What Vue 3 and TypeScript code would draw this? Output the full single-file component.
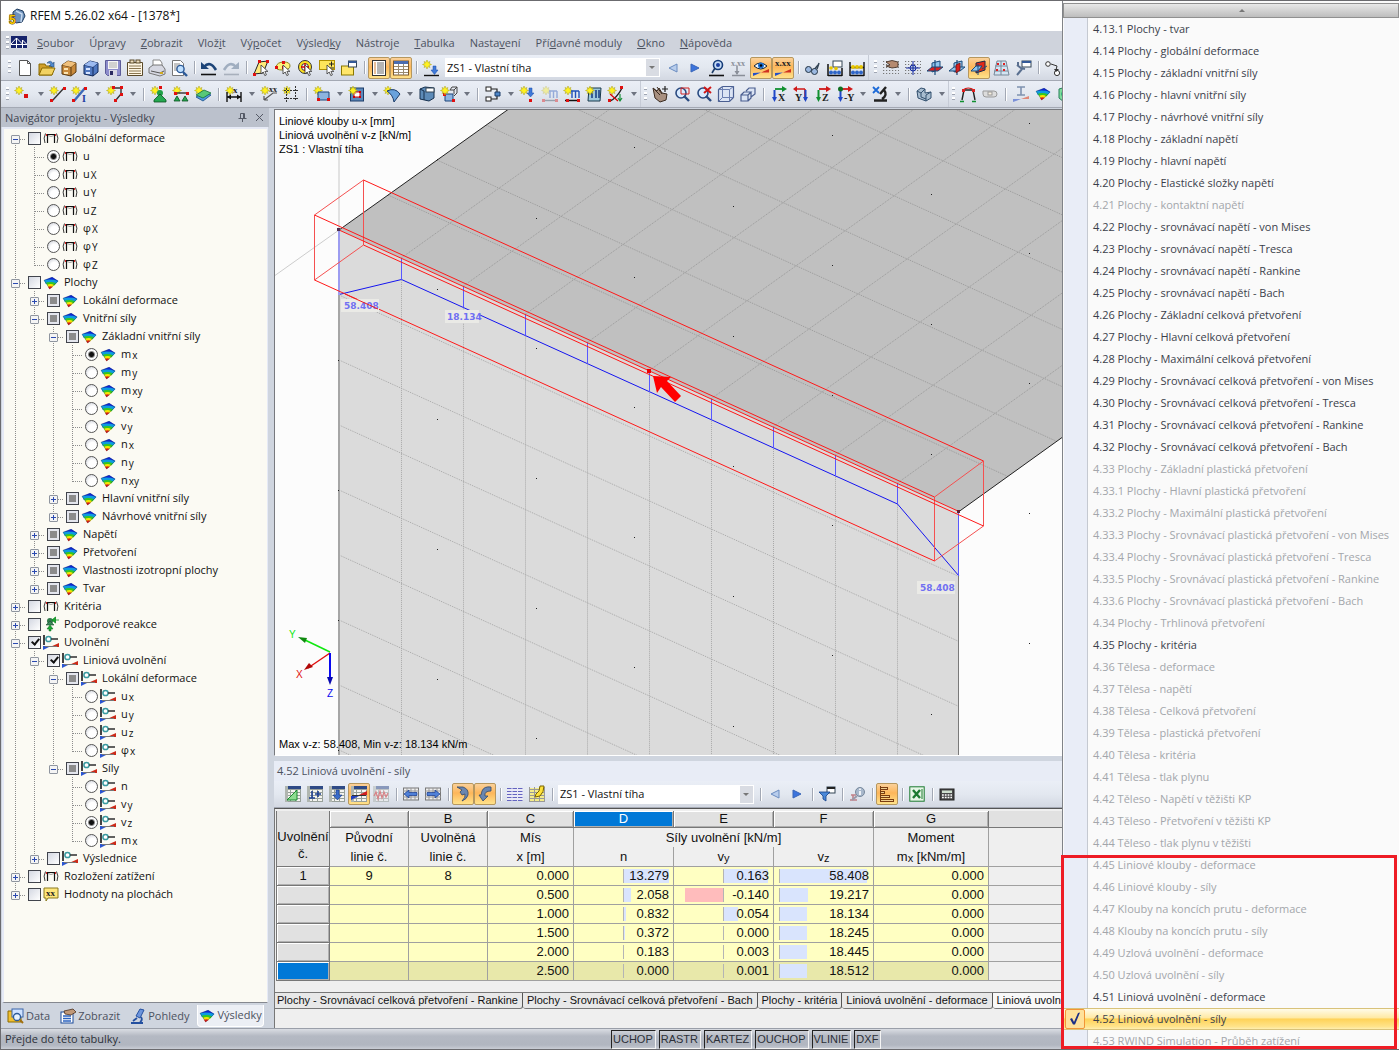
<script setup lang="ts">
import { ref } from 'vue'

/* ---------- small drawing helpers for 16x16 icons ---------- */
const R = (x: number, y: number, w: number, h: number, fill: string, stroke = 'none') =>
  `<rect x="${x}" y="${y}" width="${w}" height="${h}" fill="${fill}" stroke="${stroke}"/>`
const P = (d: string, stroke = '#222', w = 1, fill = 'none') =>
  `<path d="${d}" stroke="${stroke}" stroke-width="${w}" fill="${fill}"/>`
const C = (x: number, y: number, r: number, fill: string, stroke = 'none', w = 1) =>
  `<circle cx="${x}" cy="${y}" r="${r}" fill="${fill}" stroke="${stroke}" stroke-width="${w}"/>`
const T = (x: number, y: number, s: string, size = 8, fill = '#222') =>
  `<text x="${x}" y="${y}" font-size="${size}" font-family="Liberation Serif, serif" font-weight="bold" fill="${fill}">${s}</text>`
const dot = (x: number, y: number) => R(x, y, 3, 3, '#e01010')
const star = P('M4 0l1 2.400 2-.9-.9 2L8.500 4.500 6.100 5.500l.9 2-2-.9L4 9 3 6.600l-2 .9.9-2L-.5 4.500l2.400-1-.9-2 2 .9z', '#a89c10', 0.5, '#fff21f')
const cursor = P('M8 5v9l2.200-2 1.600 3.600 1.600-.7-1.500-3.500h3z', '#333', 0.8, '#fff')
const grid = (c: string) => P('M.5 3.500h15M.5 6.500h15M.5 9.500h15M.5 12.500h15M.5 15.500h15M.5 1v15M5.500 1v15M10.500 1v15M15.500 1v15', c, 1, 'none')
const sheet = R(0, 1, 16, 15, '#f4f4f0') + grid('#98a09a') + R(3, 0, 13, 3, '#2e4a86') + R(0, 0, 3, 16, '#b0b6b0')
const dots = P('M0 1.500h16M0 4.500h16M0 7.500h16M0 10.500h16M0 13.500h16', '#777', 1.2).replace('/>', ' stroke-dasharray="1.2 1.800"/>')
const planes = (a: string, b: string) =>
  P('M5 3l8-2v8l-8 3z', '#1a4a7a', 1, a) + P('M0 11l5-4 11 0-5 4z', '#1a4a7a', 1, b) + P('M8 0v15', '#1a4a7a', 1.2)
const eye = P('M1 6q6-6 13 0-6 6-13 0z', '#123', 1, '#eef6ff') + C(8, 5.5, 3, '#1b6fd0') + C(8, 5.5, 1.3, '#000')
const wedge = P('M0 16V13L8 12.500z', 'none', 1, '#2450c8') + P('M8 12.500h8V9z', 'none', 1, '#d03020')
const axes = (a: string, b: string, l: string, flip = false) =>
  (flip
    ? P('M12 3H3M12 3v11', a, 1.6) + P('M4 0v6L0 3z', 'none', 1, a) + P('M10 11h5l-2.500 5z', 'none', 1, b) + P('M12.500 4v8', b, 2) + T(2, 15, l, 10)
    : P('M4 3h8', a, 1.8) + P('M11 0v6l5-3z', 'none', 1, a) + P('M3.500 4v8', b, 2) + P('M1 11h5l-2.500 5z', 'none', 1, b) + T(7, 15, l, 10))
const rainbow =
  '<g transform="translate(1 2) scale(.9 .82)"><path d="M0 4L9 0l7 5-8 3z" fill="#1024d8"/><path d="M0 4q7-2 16 1l-3 3.500q-6-2-11 0z" fill="#0d9be0"/><path d="M2 7q6-2 11.500 1l-2 2.500q-4-2-7.500 0z" fill="#35c821"/><path d="M3.500 9.500q4-2 8 .5L9 12.500q-2-1-4.200 0z" fill="#f6e500"/><path d="M4.500 12q3-1.600 5 .2L6 15z" fill="#e81a10"/><path d="M0 4L9 .5l6.500 4.500-9 9.500z" fill="none" stroke="#123a50" stroke-width=".4"/></g>'

const icons: Record<string, string> = {
  app: P('M4 4l4-3 6 2 2 5-3 6-6 1-3-3z', '#1d3a5e', 1, '#6f93bd') + P('M7 3l6 3-1 8', '#c8daf0', 1.4) + '<text x="0" y="16" font-family="Liberation Sans, sans-serif" font-size="12" font-weight="bold" fill="#f5c400" stroke="#4a3a00" stroke-width="1" paint-order="stroke">5</text>',
  bridge: R(0, 1, 16, 12, '#16236b') + P('M0 9.500h16M5.500 13V3M11.500 13V5M5.500 3L0 9M5.500 3l6 6M11.500 5l4 4', '#fff', 1),
  new: P('M2.500.5h8l3 3v12h-11z', '#555', 1, '#fff') + P('M10.500.5v3h3', '#555'),
  open: P('M0 4h6l1 2h6v9H0z', '#8a6a00', 1, '#d2a02a') + P('M3 8h13l-3 7H0z', '#8a6a00', 1, '#f2d262') + P('M8 3q4-4 6 1l1-2v5l-5-1 2-1q-1-3-4-2z', '#234b7b', 0.6, '#4f8ad0'),
  drawer: P('M1 5l6-4 8 2v9l-5 4-9-2z', '#5a3a10', 1, '#c98a3c') + P('M1 5l9 2v9M10 7l5-4', '#5a3a10') + P('M1 5l6-4 8 2-5 4z', 'none', 1, '#f0c07c') + R(3, 8, 4, 2, '#fce3b0') + R(3, 12, 4, 2, '#fce3b0'),
  drawerBlue: P('M1 5l6-4 8 2v9l-5 4-9-2z', '#10285a', 1, '#5078c0') + P('M1 5l9 2v9M10 7l5-4', '#10285a') + P('M1 5l6-4 8 2-5 4z', 'none', 1, '#9cbaf0') + R(3, 8, 4, 2, '#d5e3ff') + R(3, 12, 4, 2, '#d5e3ff'),
  floppy: P('M.5.5h15v15h-13l-2-2z', '#5c5c98', 1, '#8d8dcc') + R(3, 1, 10, 8, '#f6f6f6') + P('M4 3h8M4 5h8M4 7h8', '#999', 0.8) + R(4, 10, 8, 6, '#d8d8e4') + R(5, 11, 3, 4, '#2a2a60'),
  list: P('M.5 2.500h15v13H.5z', '#5a4a2a', 1, '#fff7e4') + R(3, 0, 4, 3, '#f0e0c0', '#5a4a2a') + R(9, 0, 4, 3, '#f0e0c0', '#5a4a2a') + P('M2 6h12M2 8.500h12M2 11h12M2 13.500h12', '#8a7650'),
  print: P('M4 6V0h7l2 3v4', '#888', 1, '#fff') + P('M0 8l4-3h9l3 4v5l-5 2-11-3z', '#777', 1, '#d6d8e2') + P('M2 11l9 2 4-2', '#555') + R(11, 12, 3, 2, '#d0aa20'),
  preview: P('M1.500.5h8l3 3v12h-11z', '#777', 1, '#fff') + P('M3 4h6M3 6h6M3 8h4M3 10h3', '#888') + C(9.500, 9, 3.600, '#bfe0ff', '#2c5a98', 1.4) + P('M12 12l4 4', '#2c5a98', 2.400),
  undo: P('M0 14.500h15', '#111', 1.6) + P('M3 7Q9 0 15 10', '#1c4478', 2.600) + P('M0 2v7h8z', 'none', 1, '#1c4478'),
  redo: P('M1 14.500h15', '#a8b0bc', 1.6) + P('M13 7Q7 0 1 10', '#a0aec0', 2.600) + P('M16 2v7H8z', 'none', 1, '#a0aec0'),
  selPoly: P('M6 2l9-1-5 12-9 1z', '#222', 1, '#ffe97a') + dot(5, 0) + dot(13, 0) + dot(0, 13) + cursor,
  selEll: P('M1 7q1-5 8-5 6 0 6 4t-8 4q-6 0-6-3z', '#8a8020', 1, '#fff27a') + dot(0, 6) + dot(7, 1) + dot(7, 6) + cursor,
  selRing: C(8, 7, 6.500, '#ffe21c', '#333') + C(8, 7, 3.500, '#fff', '#333') + P('M8 3v8M4 7h8', '#d00', 1.400) + cursor,
  selRect: R(0.5, 0.5, 15, 9, '#ffe65a', '#b09000') + P('M10 4h5M12.500 1.500v5M10 8h5', '#222') + cursor,
  winNote: R(0.5, 6, 12, 9, '#ffe66a', '#8a7800') + R(7.500, 1, 8, 6, '#fff', '#345') + R(7.500, 1, 8, 2, '#345a98'),
  tabDoc: R(1.500, 0.5, 13, 15, '#fff', '#333') + P('M3 3h2M3 5h2M3 7h2M3 9h2M3 11h2M3 13h2', '#c86000', 0.8) + P('M6 3h7M6 5h7M6 7h7M6 9h7M6 11h7M6 13h7', '#444', 0.8),
  tabGrid: R(0.5, 1, 15, 14, '#fff', '#7a5a30') + R(1, 1, 14, 3, '#4a6cb0') + P('M1 6.500h14M1 9.500h14M1 12.500h14M5.500 4v11M10.500 4v11', '#9a8a70'),
  loadNew: star + P('M1 15.500h15', '#111', 1.400) + P('M10 6h3v4h2l-3.500 4.500L8 10h2z', '#164aa8', 0.5, '#3f79d8'),
  prev: P('M12 4v8L4 8z', '#6a8cc0', 1, '#b8cdec'),
  next: P('M4 4v8L12 8z', '#3a66b8', 1, '#3c74dd'),
  glass: C(9, 5, 4.500, '#c6dcf6', '#153c78', 1.600) + C(9, 5, 2, '#1b3fa0') + P('M6 8l-3 5', '#1d3c68', 1.600) + P('M0 15.500h15', '#111', 1.600),
  xxx: T(0, 6, 'x.xx', 8, '#8a8f99') + P('M6 6v8M1 15.500h13', '#8a8f99', 1.500) + P('M3.500 11h5L6 15z', 'none', 1, '#8a8f99'),
  eyeRes: eye + wedge,
  xxxRes: T(0, 6, 'x.xx', 9) + wedge,
  binoc: P('M2 7l6 4M8 11l5-6', '#345', 1.400) + C(3.500, 9.500, 3, '#9bb8e0', '#234') + C(9.500, 11.500, 3, '#9bb8e0', '#234') + P('M12 9l2-6', '#345', 1.500),
  abWin: P('M1 4v12M15 8v8M1 15.500h14', '#111', 1.500) + R(6, 1, 9, 6, '#fff', '#345') + C(4, 8, 1.800, '#e6c400') + C(4, 12.500, 2, '#2f66c8') + C(8, 12.500, 2, '#2f66c8') + C(12, 12.500, 2, '#2f66c8') + C(9, 8.500, 1.800, '#e6c400'),
  ab: P('M1 2v14M15 2v14M1 7.500h14M1 15.500h14', '#111', 1.400) + C(4, 7, 2, '#e6c400') + C(8, 7, 2, '#e6c400') + C(12, 7, 2, '#e6c400') + C(4, 12.500, 2, '#2f66c8') + C(8, 12.500, 2, '#2f66c8') + C(12, 12.500, 2, '#2f66c8'),
  handGrid: dots + P('M3 2q6-3 12 0v5l-6 1-6-2 4-1z', '#3a2a20', 0.8, '#b58a70'),
  snap: dots + C(8, 8, 3, '#bcd', '#1428a0') + P('M8 1v14M1 8h14', '#1428a0'),
  plA: planes('#8fc4ee', '#d82020'),
  plB: planes('#8fc4ee', '#8fc4ee') + P('M7 5l4-2v7l-4 3z', '#701010', 0.8, '#d82020'),
  plC: P('M5 3l9-2v9l-9 3z', '#1a2a4a', 1, '#e02818') + P('M0 11l5-5 6 0-4 5z', '#1a4a7a', 1, '#8fc4ee') + P('M7 4v11M11 9l5-3', '#1a4a7a'),
  netRed: P('M4 1h9l3 14H1z', '#789', 1, '#d3e4f2') + P('M8 1v14M2 6h12M1 11h14', '#789') + [[4, 3], [10, 3], [3, 9], [10, 9]].map(([x, y]) => R(x, y, 2, 2, '#e02020')).join(''),
  wrench: R(7, 1, 9, 6, '#fff', '#345') + R(7, 1, 9, 2, '#345a98') + P('M2 5l4 3 4 1M7 9l-5 6M3 2v4', '#5a7090', 2),
  circles: C(3, 4, 2.300, '#fff', '#333') + C(12, 13, 2.600, '#fff', '#333') + P('M6 4l6 2-1 4', '#333') + P('M9 9l5 0-3 3z', 'none', 1, '#333'),
  node: star + R(9, 8, 4, 4, '#d81010'),
  line: star + P('M2 15L14 2', '#333', 1.400) + dot(0, 13) + dot(13, 1),
  member: star + P('M2 15L13 2', '#3b69b8', 2.400) + dot(0, 13) + dot(12, 1) + T(10, 16, 'I', 10, '#1c3ca0'),
  polyl: star + P('M7 2h7v6l-5 6', '#333', 1.400) + dot(5, 0) + dot(13, 0) + dot(13, 7) + dot(7, 13),
  support: star + C(9, 7, 3, '#1fa048') + P('M9 8l6 6v2H3v-2z', '#0b5020', 0.8, '#24a850') + dot(8, 0),
  supLine: star + P('M2 7h12', '#333', 1.400) + dot(1, 6) + dot(13, 6) + P('M4 10l3 5H1z M12 10l3 5H9z', '#0b5020', 0.8, '#24a850'),
  soil: star + P('M1 11l8-5 7 3-8 6z', '#174c86', 0.8, '#4e9ae0') + P('M1 9l8-5 7 3-8 5z', '#14703a', 0.8, '#58c878'),
  dimX: star + P('M1 6v10M15 6v10M1 11h14', '#111', 1.400) + P('M1 11l4-2.500v5zM15 11l-4-2.500v5z', 'none', 1, '#111') + T(7, 7, 'x', 9),
  note: star + P('M3 14L12 7h4M3 14l0-4M3 14h4', '#555', 1.200) + T(8, 6, 'xx', 8),
  dash: star + P('M3.500 2v14M12.500 0v14M1 4.500h15M1 12.500h15', '#333').replace('/>', ' stroke-dasharray="2 1"/>'),
  surf: star + P('M4 6h11v8H4z', '#1d4478', 1, '#8cb4e0') + dot(3, 12) + dot(13, 12),
  opening: R(1.500, 2, 13, 13, '#5c8abc', '#1d3c68') + R(5, 6, 6, 5, '#fff', '#d00') + [[4, 5], [10, 5], [4, 10], [10, 10]].map(([x, y]) => R(x, y, 2, 2, '#d00000')).join('') + star,
  shell: star + P('M3 5q8-4 13 3l-6 8Q9 9 3 5z', '#1d3c68', 1, '#69a2dc'),
  solid: P('M1 3l5-2 9 1v10l-5 3-9-2z', '#16304f', 1, '#5d8bb8') + R(7, 2, 8, 4, '#fff', '#345') + P('M1 3l4 2v9', '#16304f'),
  copy: P('M4 8h8v7H4z', '#1d4478', 1, '#8cb4e0') + P('M9 4l2-3h5v6l-3 3M9 4h4v4M13 4l3-3', '#444') + dot(2, 7) + dot(11, 13) + star,
  tree2: R(1, 1, 5, 4, '#fff', '#222') + R(1, 11, 5, 4, '#fff', '#222') + P('M6 3h6v4M6 13h6v-4', '#222', 1.200) + P('M10 6h5v4h-5z', '#1d3c68', 1, '#4d86c8'),
  ldNode: star + P('M9 2h3v5h2l-3.500 4L7 7h2z', '#164aa8', 0.5, '#3f79d8') + dot(9, 13),
  ldFaint: `<g opacity=".4">${star}${P('M7 5h8M8 5v7M11.500 5v7M15 5v7', '#2050b8', 1.400)}${P('M1 14.500h15', '#345', 1.400)}${dot(0, 13)}${dot(13, 13)}</g>`,
  ldLine: star + P('M7 5h8M8 5v7M11.500 5v7M15 5v7', '#2050b8', 1.400) + P('M1 14.500h15', '#111', 1.500) + dot(2, 13) + dot(13, 13),
  ldSolid: P('M3 2h12l-1 13H2z', '#18384a', 1, '#9cc8dc') + P('M6 4v8M10 4v8M13 4v8', '#123a80', 1.500) + star,
  ldDef: star + P('M2 15Q9 12 14 2', '#222', 1.400) + P('M2 8l8 7', '#d00', 1.200) + dot(0, 13) + dot(12, 0) + P('M12 8v6M10 12l2 3 2-3', '#18903a', 1.200),
  hand: P('M1 2l4 3 2-3 3 5 5 1-1 6-6 2-5-4z', '#3b2b20', 1, '#a89080') + P('M2 3l6 6M5 1l5 7', '#3b2b20', 1) + P('M13 0v6M10 3h6', '#222', 1.200),
  zoomWin: C(7, 7, 5, '#d9ebff', '#2a4a80', 1.600) + P('M10 10l5 5', '#2a4a80', 2.400) + P('M7 2h8v6H7z', '#d02020', 1),
  zoomX: C(7, 7, 5, '#d9ebff', '#2a4a80', 1.600) + P('M10 10l5 5', '#2a4a80', 2.400) + P('M8 1l7 6M15 1L8 7', '#d01818', 2),
  cube: P('M.5 3.500l4-3h11v11l-4 4H.5z', '#4a5e90', 1.200, '#dbe4f4') + P('M4.500.5v11h11M.5 3.500h11v12M11.500 3.500l4-3M.5 15.500l4-4', '#6a7eb0', 1),
  cubes: P('M1 9h7v6H1zM1 9l3-3h7L8 9M8 15l3-3V6M6 5l3-3h6v6l-4 3', '#4a5e90', 1.200, '#dbe4f4'),
  axX: axes('#109030', '#2048c8', 'X'),
  axY: axes('#d01818', '#2048c8', 'Y', true),
  axZ: axes('#d01818', '#109030', 'Z'),
  axmY: axes('#d01818', '#2048c8', '-Y') + C(3.500, 3, 2.500, '#107020'),
  micro: P('M1 1l6 6M7 1L1 7', '#1c6ad8', 1.800) + P('M14 1L8 8M12 4q4 5-2 9M2 14.500h13', '#222', 2.400),
  box3: P('M1 5l4-3 4 1v4l6-1v6l-5 3-8-3z', '#33506e', 1, '#a8bdd0') + P('M1 5l4 2v4l5 2M10 9v6M10 9l5-3M5 7l4-4', '#33506e'),
  frame: P('M2 14l2-10h9l2 10', '#222', 1.400) + P('M3 4q5-4 11 0', '#d01010', 1.200) + R(2, 3, 3, 3, '#e02020') + R(12, 3, 3, 3, '#e02020') + P('M0 15.500h4M12 15.500h4', '#109030', 1.600),
  tube: P('M1 5h11q3 0 3 3t-3 3H4q-3 0-3-3z', '#999', 1, '#dcdcdc') + R(6, 6, 4, 3, '#f8f0e0', '#999'),
  ibeam: P('M4 1h8M8 1v8M4 9h8', '#7f92b0', 1.600) + P('M0 16v-3h8z', 'none', 1, '#7a90d8') + P('M8 13h8v-3z', 'none', 1, '#e08878'),
  iso: rainbow,
  iso2: P('M2 3l7-2 6 3-2 10-6 2-5-4z', '#28805a', 1, '#7fdc9c') + C(8, 8, 3.500, '#fce820', '#2a8') + C(8, 8, 1.500, '#e02020'),
  frameSm: P('M4.500 12V3.500h7V12', '#111', 1.2) + P('M5 4.500q3 2 6 0', '#888', 0.8) + R(3, 3, 1, 2, '#e02020') + R(12, 3, 1, 2, '#e02020') + P('M2.500 2.500Q0 7 2 12M13.500 2.500Q16 7 14 12', '#222', 0.9),
  support2: C(7, 4, 3, '#2f7a4a') + P('M7 4l4 4H3z', '#204830', 0.6, '#3a8a5a') + P('M16 3h-4M12.500 0v6L9 3z', '#0c8a20', 0.8, '#18a830') + P('M6 14v-2H4l3-4 3 4H8v2z', '#0c6a20', 0.5, '#18a830'),
  release: P('M1 0v10', '#444', 2) + C(5.500, 4, 2.600, '#fff', '#3a9aa0', 1.500) + P('M8 4h7', '#3a3a3a', 1.600) + P('M0 15v-4l8 0z', 'none', 1, '#2a55d0') + P('M7 12h9V8z', 'none', 1, '#cc2a18') + P('M2 11.500h12', '#777', 1),
  xxTag: P('M1 1h14v10H5l-2 3v-3H1z', '#8a7a20', 1, '#ffe67a') + T(3, 9, 'xx', 9),
  tData: P('M0 3h5l1 2h7v9H0z', '#8a6a00', 1, '#f2c030') + R(4, 1, 11, 8, '#cfe2ff', '#3a64a8') + C(9, 9, 3.500, '#e6f2ff', '#2c5a98', 1.300) + P('M12 12l3 3', '#a07010', 2),
  tShow: R(1, 4, 12, 11, '#fff', '#1b4a9a') + P('M3 8h8M3 10.500h8M3 13h8', '#2a62c0', 1.300) + P('M4 3l9-2 3 3-5 3-6-1z', '#4a3020', 0.8, '#c09878'),
  tView: P('M10 1l4 1-4 8-4-2z', '#2450a0', 1, '#6c94dc') + P('M11 9q2 3-1 5M1 15h12M3 13l4-3', '#2450a0', 1.800),
  tri: sheet + P('M2 14L12 4v10z', '#1a8a30', 1, '#8edc90'),
  tMin: sheet + P('M5 5v7M2 12h6M8 8h6M11 5v6', '#1d3f90', 1.600),
  tDown: sheet + P('M7 4h3v5h3l-4.500 5L4 9h3z', '#14388a', 0.6, '#3a6cc8'),
  tRes: sheet + P('M0 14v-4l8 0z', 'none', 1, '#2240c0') + P('M8 9h8V5z', 'none', 1, '#d02020') + P('M1 9.500h14', '#333'),
  tWave: `<g opacity=".5">${sheet}${P('M1 10l2-4 2 7 2-8 2 7 2-6 2 5 2-4', '#d02020', 1.200)}</g>`,
  tLeft: R(0.5, 2, 15, 12, '#eee', '#777') + P('M0 5h16M0 11h16M4 2v12M8 2v12M12 2v12', '#999') + P('M1 8l5-4v2.500h8v3H6V12z', '#16388a', 0.7, '#4f80d8'),
  tRight: R(0.5, 2, 15, 12, '#eee', '#777') + P('M0 5h16M0 11h16M4 2v12M8 2v12M12 2v12', '#999') + P('M15 8l-5-4v2.500H2v3h8V12z', '#16388a', 0.7, '#4f80d8'),
  hookR: P('M2 1h6q6 2 5 8-1 4-6 6 4-4 3-7l-3 1-2-3 2-2z', '#34496a', 0.8, '#6a86b0'),
  hookL: P('M14 1q-7-1-9 4l-1 4H2l4 6 5-5H8q-1-5 6-5z', '#34496a', 0.8, '#6a86b0'),
  cols: R(0, 2, 16, 12, '#e9e9f6') + P('M0 2.500h16M0 5.500h16M0 8.500h16M0 11.500h16M0 14.500h16', '#6464c0').replace('/>', ' stroke-dasharray="4.500 1"/>'),
  pen: R(0, 2, 16, 13, '#f4ec8a') + grid('#999') + P('M11 0h4q0 6-4 10l-5 1 1-3q4-2 4-8z', '#7a6400', 1, '#ffe23a'),
  funnel: R(8, 1, 8, 6, '#fff', '#345') + R(8, 1, 8, 2, '#222') + P('M0 6h11l-4 4v5l-3-2v-3z', '#123f88', 0.8, '#4a88d8'),
  info: P('M1 14h7M2 9h5M4 9v5', '#c08088', 1.600) + C(11, 6, 4.500, '#a8b8cc', '#77889c') + P('M11 5v4M11 2.500v1.500', '#fff', 1.600) + P('M8 10l-5 4', '#99a', 2),
  bars: P('M1.500 0v16', '#7a3c10') + R(1.500, 1.500, 7, 2, '#f0d090', '#7a3c10') + R(1.500, 5.500, 4, 2, '#f0d090', '#7a3c10') + R(1.500, 9.500, 9, 2, '#f0d090', '#7a3c10') + R(1.500, 13.500, 13, 2, '#f0d090', '#7a3c10'),
  excel: R(0.8, 0.8, 14.400, 14.400, '#e6f6e6', '#1c7a30') + P('M4 4l7 8M11 4l-7 8', '#1c7a30', 2.400) + P('M13 3v10', '#1c7a30'),
  calc: R(1, 3, 14, 11, '#4a4a4a', '#222') + R(3, 4.500, 10, 2.500, '#cfe0cf') + P('M3 9h10M3 11.500h10', '#fff', 1.500).replace('/>', ' stroke-dasharray="1.800 1"/>'),
}

/* ---------- bars ---------- */
const menus = [
  ['', 'S', 'oubor'], ['Úpr', 'a', 'vy'], ['', 'Z', 'obrazit'], ['Vlož', 'i', 't'], ['Vý', 'p', 'očet'], ['Výsled', 'k', 'y'],
  ['Nástro', 'j', 'e'], ['', 'T', 'abulka'], ['Nasta', 'v', 'ení'], ['Pří', 'd', 'avné moduly'], ['', 'O', 'kno'], ['', 'N', 'ápověda'],
]
/* '|' separator, '#' new group, 'v' drop arrow, leading '*' pressed button, '@' load case box */
const bar1 = 'new open drawer drawerBlue floppy list print preview | undo redo | selPoly selEll selRing selRect winNote | *tabDoc *tabGrid | loadNew @ prev next glass xxx *eyeRes *xxxRes | binoc abWin ab # handGrid snap plA plB *plC netRed wrench | circles'.split(' ')
const bar2 = 'node v line member v polyl v | support supLine soil | dimX v note dash | surf v opening v shell v solid copy v | tree2 v ldNode ldFaint ldLine ldSolid ldDef v # hand zoomWin zoomX cube cubes | axX axY axZ axmY v micro v | box3 v # frame tube | ibeam iso iso2'.split(' ')
const bar3 = 'tri tMin tDown *tRes tWave | tLeft tRight | *hookR *hookL | cols pen | @ | prev next | funnel | info | *bars | excel | calc'.split(' ')
const name = (s: string) => s.replace('*', '')
const loadCase = ref('ZS1 - Vlastní tíha')

/* ---------- navigator tree ---------- */
interface Node { t: string; s?: string; i: string; b: 'off' | 'mix' | 'on' | 'radio' | 'sel'; k?: Node[]; more?: boolean }
const rad = (i: string, list: string, sel: string): Node[] =>
  list.split(' ').map((x) => ({ t: x[0], s: x.slice(1), i, b: x === sel ? 'sel' : 'radio' }))
const tree: Node[] = [
  { t: 'Globální deformace', i: 'frameSm', b: 'off', k: rad('frameSm', 'u uX uY uZ φX φY φZ', 'u') },
  { t: 'Plochy', i: 'iso', b: 'off', k: [
    { t: 'Lokální deformace', i: 'iso', b: 'mix', more: true },
    { t: 'Vnitřní síly', i: 'iso', b: 'mix', k: [
      { t: 'Základní vnitřní síly', i: 'iso', b: 'mix', k: rad('iso', 'mx my mxy vx vy nx ny nxy', 'mx') },
      { t: 'Hlavní vnitřní síly', i: 'iso', b: 'mix', more: true },
      { t: 'Návrhové vnitřní síly', i: 'iso', b: 'mix', more: true },
    ] },
    { t: 'Napětí', i: 'iso', b: 'mix', more: true },
    { t: 'Přetvoření', i: 'iso', b: 'mix', more: true },
    { t: 'Vlastnosti izotropní plochy', i: 'iso', b: 'mix', more: true },
    { t: 'Tvar', i: 'iso', b: 'mix', more: true },
  ] },
  { t: 'Kritéria', i: 'frameSm', b: 'off', more: true },
  { t: 'Podporové reakce', i: 'support2', b: 'off', more: true },
  { t: 'Uvolnění', i: 'release', b: 'on', k: [
    { t: 'Liniová uvolnění', i: 'release', b: 'on', k: [
      { t: 'Lokální deformace', i: 'release', b: 'mix', k: rad('release', 'ux uy uz φx', '') },
      { t: 'Síly', i: 'release', b: 'mix', k: rad('release', 'n vy vz mx', 'vz') },
    ] },
    { t: 'Výslednice', i: 'release', b: 'off', more: true },
  ] },
  { t: 'Rozložení zatížení', i: 'frameSm', b: 'off', more: true },
  { t: 'Hodnoty na plochách', i: 'xxTag', b: 'off', more: true },
]
interface Row { n: Node; cells: string[]; ex: string; id: string; group: string }
const rows: Row[] = []
function walk(list: Node[], trail: string[], group: string) {
  list.forEach((n, i) => {
    const last = i === list.length - 1
    const own = last ? 'elbow' : rows.length === 0 ? 'first' : 'tee'
    rows.push({ n, cells: [...trail, own], ex: n.k ? '−' : n.more ? '+' : '', id: 'n' + rows.length, group })
    if (n.k) walk(n.k, [...trail, last ? 'none' : 'pass'], 'g' + rows.length)
  })
}
walk(tree, [], 'g')
const dockTabs = [['tData', 'Data'], ['tShow', 'Zobrazit'], ['tView', 'Pohledy'], ['iso', 'Výsledky']]

/* ---------- model view ---------- */
const xs = Array.from({ length: 11 }, (_, i) => 339 + 62 * i)
const edgeY = (x: number) => 230 + (x - 339) * 0.454
const specks: number[][] = []
for (let i = -1; i <= 7; i++) {
  for (let k = -6; k <= 9; k++) {
    const y = 289 - 71 * i + 130 * k
    if (y > 112 && y < 754) specks.push([437 + Math.round(98.7 * i), y])
  }
}

/* ---------- results table ---------- */
const data = [
  ['1', '9', '8', '0.000', 13.279, 0.163, 58.408], ['', '', '', '0.500', 2.058, -0.14, 19.217], ['', '', '', '1.000', 0.832, 0.054, 18.134],
  ['', '', '', '1.500', 0.372, 0, 18.245], ['', '', '', '2.000', 0.183, 0.003, 18.445], ['', '', '', '2.500', 0, 0.001, 18.512],
]
const bar = (v: number, k: number) => ({ width: Math.floor(Math.abs(v) * k) + 'px' })
const sheetTabs = ['Plochy - Srovnávací celková přetvoření - Rankine', 'Plochy - Srovnávací celková přetvoření - Bach', 'Plochy - kritéria', 'Liniová uvolnění - deformace', 'Liniová uvolnění - síly']
const panes = ['UCHOP', 'RASTR', 'KARTEZ', 'OUCHOP', 'VLINIE', 'DXF']

/* ---------- table list popup; leading '-' means unavailable ---------- */
const upper = ['4.13.1 Plochy - tvar', '4.14 Plochy - globální deformace', '4.15 Plochy - základní vnitřní síly', '4.16 Plochy - hlavní vnitřní síly', '4.17 Plochy - návrhové vnitřní síly', '4.18 Plochy - základní napětí', '4.19 Plochy - hlavní napětí', '4.20 Plochy - Elastické složky napětí', '-4.21 Plochy - kontaktní napětí', '4.22 Plochy - srovnávací napětí - von Mises', '4.23 Plochy - srovnávací napětí - Tresca', '4.24 Plochy - srovnávací napětí - Rankine', '4.25 Plochy - srovnávací napětí - Bach', '4.26 Plochy - Základní celková přetvoření', '4.27 Plochy - Hlavní celková přetvoření', '4.28 Plochy - Maximální celková přetvoření', '4.29 Plochy - Srovnávací celková přetvoření - von Mises', '4.30 Plochy - Srovnávací celková přetvoření - Tresca', '4.31 Plochy - Srovnávací celková přetvoření - Rankine', '4.32 Plochy - Srovnávací celková přetvoření - Bach', '-4.33 Plochy - Základní plastická přetvoření', '-4.33.1 Plochy - Hlavní plastická přetvoření', '-4.33.2 Plochy - Maximální plastická přetvoření', '-4.33.3 Plochy - Srovnávací plastická přetvoření - von Mises', '-4.33.4 Plochy - Srovnávací plastická přetvoření - Tresca', '-4.33.5 Plochy - Srovnávací plastická přetvoření - Rankine', '-4.33.6 Plochy - Srovnávací plastická přetvoření - Bach', '-4.34 Plochy - Trhlinová přetvoření', '4.35 Plochy - kritéria', '-4.36 Tělesa - deformace', '-4.37 Tělesa - napětí', '-4.38 Tělesa - Celková přetvoření', '-4.39 Tělesa - plastická přetvoření', '-4.40 Tělesa - kritéria', '-4.41 Tělesa - tlak plynu', '-4.42 Těleso - Napětí v těžišti KP', '-4.43 Těleso - Přetvoření v těžišti KP', '-4.44 Těleso - tlak plynu v těžišti']
const lower = ['-4.45 Liniové klouby - deformace', '-4.46 Liniové klouby - síly', '-4.47 Klouby na koncích prutu - deformace', '-4.48 Klouby na koncích prutu - síly', '-4.49 Uzlová uvolnění - deformace', '-4.50 Uzlová uvolnění - síly', '4.51 Liniová uvolnění - deformace', '4.52 Liniová uvolnění - síly', '-4.53 RWIND Simulation - Průběh zatížení']
const popup = [{ cls: 'plain', items: upper }, { cls: 'marked', items: lower }]
</script>

<template>
  <div class="app">
    <header class="title"><svg class="ic" v-html="icons.app" /><span>RFEM 5.26.02 x64 - [1378*]</span></header>

    <nav class="menubar">
      <i class="grip" /><svg class="ic" v-html="icons.bridge" />
      <button v-for="m in menus" :key="m.join('')" type="button">{{ m[0] }}<u>{{ m[1] }}</u>{{ m[2] }}</button>
    </nav>

    <div v-for="(b, bi) in [bar1, bar2]" :key="bi" class="toolbar" :class="{ second: bi === 1 }">
      <i class="grip" />
      <template v-for="(s, i) in b" :key="i">
        <i v-if="s === '|'" class="sep" />
        <span v-else-if="s === '#'" class="group"><i class="grip" /></span>
        <button v-else-if="s === 'v'" type="button" class="drop" aria-label="Další" />
        <span v-else-if="s === '@'" class="combo wide"><select v-model="loadCase" aria-label="Zatěžovací stav"><option>ZS1 - Vlastní tíha</option></select></span>
        <button v-else type="button" class="tool" :class="{ on: s[0] === '*' }" :aria-label="name(s)"><svg class="ic" v-html="icons[name(s)]" /></button>
      </template>
    </div>

    <main class="work">
      <aside class="dock">
        <div class="dock-head">
          <span>Navigátor projektu - Výsledky</span>
          <button type="button" aria-label="Připnout"><svg width="9" height="9" viewBox="0 0 9 9"><path d="M2.500 5V.5h4V5M.5 5.500h8M4.500 6v3M5.500 1v4" fill="none" stroke="#555a66" /></svg></button>
          <button type="button" aria-label="Zavřít"><svg width="9" height="9" viewBox="0 0 9 9"><path d="M1 1l7 7M8 1L1 8" fill="none" stroke="#555a66" /></svg></button>
        </div>
        <div class="tree">
          <div v-for="r in rows" :key="r.id" class="row">
            <span v-for="(c, ci) in r.cells" :key="ci" class="cell" :class="[c, { own: ci === r.cells.length - 1 }]">
              <button v-if="r.ex && ci === r.cells.length - 1" type="button" class="exp" :class="{ plus: r.ex === '+' }" :aria-label="r.ex" />
            </span>
            <input v-if="r.n.b === 'radio' || r.n.b === 'sel'" :id="r.id" type="radio" :name="r.group" :checked="r.n.b === 'sel'" />
            <input v-else :id="r.id" type="checkbox" :class="{ mix: r.n.b === 'mix' }" :checked="r.n.b === 'on'" />
            <label :for="r.id"><svg class="ic" v-html="icons[r.n.i]" /><span class="lbl">{{ r.n.t }}<small v-if="r.n.s">{{ r.n.s }}</small></span></label>
          </div>
        </div>
        <div class="dock-tabs">
          <button v-for="(t, i) in dockTabs" :key="t[1]" type="button" :class="{ active: i === 3 }"><svg class="ic" v-html="icons[t[0]]" />{{ t[1] }}</button>
        </div>
      </aside>

      <section class="right">
        <div class="view">
          <svg class="scene" aria-label="Model">
            <defs>
              <clipPath id="topFace"><path d="M339 230L541 86H1500V123L959 511.500z" /></clipPath>
              <clipPath id="sideFace"><path d="M339 230L959 511.500V770H339z" /></clipPath>
            </defs>
            <g transform="translate(-275 -110)">
              <path d="M339 100V230" stroke="#e2e2e2" stroke-width="2" />
              <path d="M270 279L339 230" stroke="#cccccc" />
              <path d="M339 230L541 86H1500V123L959 511.500z" fill="#c0c0c0" />
              <path d="M339 230L959 511.500V770H339z" fill="#dbdbdb" />
              <g clip-path="url(#topFace)" stroke="#999999" stroke-dasharray="1 1">
                <path v-for="x in xs.slice(1, 10)" :key="'a' + x" :d="`M${x} ${edgeY(x)}l800 -571`" />
                <path v-for="k in 14" :key="'b' + k" :d="`M${339 + 49 * k} ${230 - 35 * k}l620 281.500`" />
              </g>
              <g clip-path="url(#sideFace)" stroke="#a8a8a8" stroke-dasharray="1 1">
                <path v-for="x in xs.slice(1, 10)" :key="'c' + x" :d="`M${x + 0.5} ${edgeY(x)}V770`" />
                <path v-for="k in 11" :key="'d' + k" :d="`M339 ${230 + 65 * k}l620 281.500`" />
              </g>
              <path d="M339 230V770" stroke="#a6a6a6" stroke-width="2" />
              <path d="M958.500 511V770" stroke="#7a7a7a" />
              <path d="M339 230L541 86M959 511.500L1500 123" stroke="#222" fill="none" />
              <rect v-for="(p, i) in specks" :key="i" :x="p[0]" :y="p[1]" width="1" height="1" fill="#222" />
              <g fill="none" stroke="#5858ff">
                <path d="M339 294.500L401.500 279.500L897.500 504L959 576" stroke="#1414f0" />
                <path d="M339 230V295" stroke="#9c9cf0" stroke-width="2" />
                <path d="M958.500 512V576" />
                <path v-for="x in xs.slice(1, 10)" :key="'e' + x" :d="`M${x + 0.5} ${edgeY(x)}V${279.500 + (x - 401) * 0.4526}`" stroke="#5858ff" />
              </g>
              <g fill="none" stroke="#ff1818">
                <path d="M314.500 215L363.500 180V245L314.500 280zM934.500 497L983.500 461V526L934.500 561z" stroke="#f55050" />
                <path d="M314.500 215L934.500 497M363.500 180L983.500 461M363.500 245L983.500 526M314.500 280L934.500 561M339 230L959 511.500" />
              </g>
              <rect x="337" y="228" width="3" height="3" fill="#503050" /><rect x="957" y="510" width="3" height="3" fill="#602030" />
              <rect x="647" y="369" width="4" height="4" fill="#e00" />
              <path d="M653 376l18 1-4 4 14 15-6 6-14-15-4 6z" fill="#f00" />
              <g class="val">
                <rect x="341" y="299" width="38" height="13" /><text x="344" y="309">58.408</text>
                <rect x="445" y="310" width="34" height="13" /><text x="447" y="320">18.134</text>
                <rect x="917" y="581" width="38" height="13" /><text x="920" y="591">58.408</text>
              </g>
              <path d="M345 294L378 309" stroke="#f02020" fill="none" />
              <g stroke-width="1.500" fill="none"><path d="M330 652L305 640" stroke="#10e810" /><path d="M330 653L308 668" stroke="#e01010" /><path d="M330 653V678" stroke="#0808f0" stroke-width="2" /></g>
              <path d="M298 637l9 1-2 5z" fill="#108a10" /><path d="M304 670l5-7 4 4z" fill="#b00808" /><path d="M327 677h6l-3 8z" fill="#0808b0" />
              <g class="axis"><text x="289" y="638" fill="#10e810">Y</text><text x="296" y="678" fill="#e01010">X</text><text x="327" y="697" fill="#0808f0">Z</text></g>
            </g>
          </svg>
          <div class="caption top">Liniové klouby u-x [mm]<br />Liniová uvolnění v-z [kN/m]<br />ZS1 : Vlastní tíha</div>
          <div class="caption bottom">Max v-z: 58.408, Min v-z: 18.134 kN/m</div>
        </div>

        <div class="panel">
          <div class="panel-title">4.52 Liniová uvolnění - síly</div>
          <div class="toolbar third">
            <template v-for="(s, i) in bar3" :key="i">
              <i v-if="s === '|'" class="sep" />
              <span v-else-if="s === '@'" class="combo"><select v-model="loadCase" aria-label="Zatěžovací stav tabulky"><option>ZS1 - Vlastní tíha</option></select></span>
              <button v-else type="button" class="tool" :class="{ on: s[0] === '*' }" :aria-label="name(s)"><svg class="ic" v-html="icons[name(s)]" /></button>
            </template>
          </div>
          <div class="grid">
            <table>
              <colgroup><col class="c0" /><col class="c1" /><col class="c1" /><col class="c2" /><col class="c3" /><col class="c3" /><col class="c3" /><col class="c4" /><col /></colgroup>
              <thead>
                <tr class="letters"><th class="corner" rowspan="3">Uvolnění<br />č.</th><th>A</th><th>B</th><th>C</th><th class="cur">D</th><th>E</th><th>F</th><th>G</th><th class="rest" /></tr>
                <tr class="h1"><th>Původní</th><th>Uvolněná</th><th>Mís</th><th colspan="3">Síly uvolnění [kN/m]</th><th>Moment</th><th /></tr>
                <tr class="h2"><th>linie č.</th><th>linie č.</th><th>x [m]</th><th>n</th><th>v<small>y</small></th><th>v<small>z</small></th><th>m<small>x</small> [kNm/m]</th><th /></tr>
              </thead>
              <tbody>
                <tr v-for="(d, i) in data" :key="i" :class="{ last: i === 5 }">
                  <th>{{ d[0] }}</th><td class="mid">{{ d[1] }}</td><td class="mid">{{ d[2] }}</td><td>{{ d[3] }}</td>
                  <td><i class="bar half" :style="bar(+d[4], 3.46)" /><span>{{ (+d[4]).toFixed(3) }}</span></td>
                  <td><i class="bar" :class="+d[5] < 0 ? 'neg' : 'half'" :style="bar(+d[5], 272)" /><span>{{ (+d[5]).toFixed(3) }}</span></td>
                  <td><i class="bar left" :style="bar(+d[6], 1.5)" /><span>{{ (+d[6]).toFixed(3) }}</span></td>
                  <td>0.000</td><td class="rest" />
                </tr>
              </tbody>
            </table>
            <div class="sheet-tabs"><button v-for="(t, i) in sheetTabs" :key="t" type="button" :class="{ active: i === 4 }">{{ t }}</button></div>
          </div>
        </div>
      </section>
    </main>

    <footer class="status"><span class="hint">Přejde do této tabulky.</span><span v-for="p in panes" :key="p" class="pane">{{ p }}</span></footer>

    <div class="popup">
      <button type="button" class="scroll" aria-label="Nahoru"><i /></button>
      <div v-for="g in popup" :key="g.cls" :class="g.cls">
        <button v-for="t in g.items" :key="t" type="button" class="item" :class="{ hot: t.startsWith('4.52') }" :disabled="t[0] === '-'">
          <span class="gut"><svg v-if="t.startsWith('4.52')" width="12" height="14" viewBox="0 0 12 14"><path d="M1 7l2-1 2 4 4-9 2-.5-5 12H4z" fill="#1c2f86" /></svg></span>
          <span class="txt">{{ t.replace(/^-/, '') }}</span>
        </button>
      </div>
    </div>
  </div>
</template>

<style>
html, body { margin: 0; }
</style>

<style scoped>
.app { position: relative; display: flex; flex-direction: column; height: 100vh; overflow: hidden; box-sizing: border-box; border: 1px solid #6b6b6f; border-right: 0; background: #cfd5df; font: 11px/18px "Open Sans", "Noto Sans", sans-serif; color: #111; }
button { font: inherit; color: inherit; border: 0; padding: 0; margin: 0; background: none; }
.ic { width: 16px; height: 16px; flex: none; overflow: visible; }
.title { display: flex; align-items: center; gap: 5px; height: 30px; padding-left: 8px; background: #fff; font-size: 12px; flex: none; }
.menubar { display: flex; align-items: center; height: 24px; padding-left: 4px; background: #cfd3dc; color: #4c5260; flex: none; }
.menubar .grip { margin-right: 2px; }
.menubar button { margin-left: 9px; padding: 0 3px; white-space: nowrap; }
.menubar .ic + button { margin-left: 7px; }
.grip { width: 3px; height: 15px; margin: 0 1px; flex: none; background: repeating-linear-gradient(#fff 0 2px, #9fa5b2 2px 3px, transparent 3px 5px); }
.toolbar { display: flex; align-items: center; height: 25px; flex: none; padding-left: 6px; overflow: hidden; background: linear-gradient(#eaeef6, #e3e8f0 50%, #d3d8e2); border-bottom: 1px solid #a4a9b4; }
.toolbar .grip { margin-right: 3px; }
.toolbar.second { height: 26px; padding-left: 4px; }
.tool { display: flex; align-items: center; justify-content: center; flex: none; width: 22px; height: 22px; box-sizing: border-box; }
.tool.on { border: 1px solid #b6975e; border-radius: 2px; background: linear-gradient(#fbd19a, #fdb65a 45%, #ffe28a); }
.sep { width: 1px; height: 13px; margin: 0 3px 0 4px; background: #a2a8b4; box-shadow: 1px 0 #fff; flex: none; }
.second .sep { margin-right: 4px; }
.group { display: flex; align-items: center; width: 11px; height: 100%; justify-content: flex-end; flex: none; border-left: 1px solid #c6cbd6; }
.group .grip { margin-left: 0; }
.second .group { width: 8px; }
.second .group .grip { margin-right: 2px; }
.drop { width: 13px; height: 20px; display: flex; align-items: center; justify-content: center; flex: none; }
.drop::after { content: ""; border: 3px solid transparent; border-top: 4px solid #6e7480; border-bottom: 0; }
.combo { position: relative; flex: none; width: 196px; height: 19px; margin: 0 2px; }
.combo.wide { width: 215px; margin-left: 3px; }
.combo::before { content: ""; position: absolute; right: 1px; top: 1px; width: 13px; height: 17px; background: #d9dce3; pointer-events: none; }
.combo::after { content: ""; position: absolute; right: 5px; top: 8px; border: 3px solid transparent; border-top: 3px solid #777; border-bottom: 0; pointer-events: none; }
.combo select { appearance: none; width: 100%; height: 100%; border: 0; border-radius: 0; padding: 0 2px; background: #fff; font: inherit; color: #111; }

.work { flex: 1; display: flex; min-height: 0; }
.dock { flex: none; width: 268px; display: flex; flex-direction: column; }
.dock-head { display: flex; align-items: center; gap: 8px; height: 19px; padding: 0 5px 0 4px; background: #bbc1cc; color: #3e4450; }
.dock-head span { flex: 1; }
.dock-head button { display: flex; }
.tree { flex: 1; margin: 0 1px; border: 2px solid #e6eaf6; border-right-width: 1px; border-bottom: 1px solid #85888f; background: #fbfaf3; padding-left: 2px; overflow: hidden; }
.row { display: flex; align-items: center; height: 18px; }
.cell { flex: none; width: 19px; height: 18px; --v: repeating-linear-gradient(#8d8d8d 0 1px, transparent 1px 2px); --h: repeating-linear-gradient(90deg, #8d8d8d 0 1px, transparent 1px 2px); background-repeat: no-repeat; }
.cell.own { width: 22px; display: flex; align-items: center; }
.pass { background-image: var(--v); background-position: 9px 0; background-size: 1px 18px; }
.tee, .first, .elbow { background-image: var(--v), var(--h); background-repeat: no-repeat; background-position: 9px 0, 10px 10px; background-size: 1px 18px, 10px 1px; }
.elbow { background-size: 1px 11px, 10px 1px; }
.first { background-position: 9px 10px, 10px 10px; }
.exp { width: 9px; height: 9px; box-sizing: border-box; border: 1px solid #8f959f; border-radius: 1px; margin: 3px 0 0 5px; background: linear-gradient(#2a49b0, #2a49b0) center/5px 1px no-repeat, #f4f4f4; }
.exp.plus { background: linear-gradient(#2a49b0, #2a49b0) center/5px 1px no-repeat, linear-gradient(#2a49b0, #2a49b0) center/1px 5px no-repeat, #f4f4f4; }
.row input { appearance: none; margin: 0; flex: none; width: 13px; height: 13px; box-sizing: border-box; border: 1px solid #41444c; background: linear-gradient(135deg, #d4d8e2, #fff); }
.row input[type="radio"] { border-radius: 50%; border-color: #555; background: radial-gradient(circle at 60% 65%, #fff 40%, #c4c8d2); }
.row input[type="radio"]:checked { background: radial-gradient(circle at 50% 50%, #111 0 2px, #fff 4px, #dfe2ea); }
.row input.mix { background: linear-gradient(#8b8b8b, #8b8b8b) center/7px 7px no-repeat, #e4e6ee; }
.row input[type="checkbox"]:checked::after { content: ""; display: block; width: 3px; height: 6px; margin: 0 0 0 4px; border: solid #111; border-width: 0 2px 2px 0; transform: rotate(40deg); }
.row label { display: flex; align-items: center; margin-left: 2px; }
.row label .ic { height: 14px; }
.lbl { margin-left: 5px; white-space: nowrap; line-height: 18px; }
.lbl small { font-size: 10px; margin-left: 1px; position: relative; top: 1px; }
.dock-tabs { display: flex; align-items: center; height: 25px; padding-left: 5px; color: #4c5260; flex: none; }
.dock-tabs button { display: flex; align-items: center; gap: 2px; height: 22px; padding: 0 4px 0 2px; margin-right: 4px; white-space: nowrap; }
.dock-tabs .active { background: #eceff5; border: 1px solid #fff; border-top: 0; border-radius: 0 0 4px 4px; padding: 0 1px; }
.dock-tabs .active .ic { height: 14px; }

.right { flex: 1; min-width: 0; display: flex; flex-direction: column; margin-left: 5px; }
.view { position: relative; flex: 1; min-height: 0; margin-top: 1px; box-sizing: border-box; border: 1px solid #77797e; border-bottom-color: #fff; background: #fcfcfc; overflow: hidden; }
.scene { display: block; width: 100%; height: 100%; }
.val { font: bold 9px "DejaVu Sans", sans-serif; fill: #7070f2; }
.val rect { fill: #eaeae6; }
.axis { font: 10px "Liberation Sans", sans-serif; }
.caption { position: absolute; left: 4px; font: 11px/14px "Liberation Sans", Arial, sans-serif; color: #000; white-space: nowrap; }
.caption.top { top: 4px; }
.caption.bottom { bottom: 4px; }
.panel { flex: none; height: 267px; margin-top: 5px; display: flex; flex-direction: column; background: #e8ecf6; }
.panel-title { height: 20px; line-height: 20px; padding-left: 3px; color: #4c5260; }
.third { height: 26px; padding-left: 8px; }
.grid { flex: 1; background: #efefef; border-top: 1px solid #555; border-left: 1px solid #777; padding: 2px 0 0 1px; box-sizing: border-box; overflow: hidden; }
table { width: 100%; border-collapse: separate; border-spacing: 0; table-layout: fixed; font: 13px/18px "Liberation Sans", Arial, sans-serif; }
.c0 { width: 54px; } .c1 { width: 79px; } .c2 { width: 86px; } .c3 { width: 100px; } .c4 { width: 115px; }
th { font-weight: normal; padding: 0; }
thead th, td { border-right: 1px solid #a0a0a0; border-bottom: 1px solid #a0a0a0; }
.letters th { height: 16px; line-height: 16px; background: #e1e1e1; border-color: #777; box-shadow: inset 1px 1px #fff, inset -1px -1px #b0b0b0; }
.letters .cur { background: #0078d7; color: #fff; }
.letters .rest { box-shadow: none; }
.letters .corner { vertical-align: bottom; line-height: 17px; padding-bottom: 4px; box-shadow: none; border-left: 1px solid #777; }
.h1 th { height: 19px; border-bottom: 0; }
.h2 th { height: 19px; }
.h2 small { font-size: 11px; position: relative; top: 1px; }
tbody th { height: 18px; background: #e1e1e1; border: 1px solid #777; border-top: 0; box-shadow: inset 1px 1px #fff, inset -1px -1px #b0b0b0; }
td { position: relative; height: 18px; padding: 0 4px; text-align: right; background: #ffffc2; }
td.mid { text-align: center; padding: 0; }
td.rest { background: #efefef; border-right: 0; }
td span { position: relative; }
.last td { background: #e8e8aa; }
.last td.rest { background: #efefef; }
.last th { background: #0078d7; }
.bar { position: absolute; top: 2px; bottom: 2px; background: #d9e4fd; }
.bar.half { left: 49px; border-left: 1px solid #b4b4b4; }
.bar.neg { right: 49px; background: #ffbcbc; border-right: 1px solid #b4b4b4; }
.bar.left { left: 5px; border-left: 1px solid #b4b4b4; }
.sheet-tabs { display: flex; margin: 11px 0 0 -3px; border-top: 1px solid #777; }
.sheet-tabs button { flex: none; height: 16px; padding: 0 4px; font: 11px/15px "Liberation Sans", Arial, sans-serif; background: #e8e8e8; border-right: 1px solid #555; border-bottom: 1px solid #777; border-radius: 0 0 3px 3px; white-space: nowrap; }
.sheet-tabs .active { background: #f8f8f8; }

.status { flex: none; display: flex; align-items: center; height: 21px; box-sizing: border-box; border-top: 1px solid #9a9fa9; background: linear-gradient(#dadde3, #b4b9c3 35%, #b1b6c0 80%, #c9cdd5); color: #2c3038; }
.hint { flex: none; width: 606px; padding-left: 4px; }
.pane { flex: none; height: 17px; margin-right: 3px; padding: 0 2px 0 1px; font: 11px/17px "Liberation Sans", Arial, sans-serif; border: solid; border-width: 1px; border-color: #222 #f4f4f4 #f4f4f4 #222; }

.popup { position: absolute; top: 0; right: 0; width: 337px; box-sizing: border-box; border-left: 1px solid #808388; background: #fafafa; padding-top: 2px; color: #3a3f4b; }
.scroll { display: flex; align-items: center; justify-content: center; width: 100%; height: 15px; box-sizing: border-box; padding-left: 22px; border: 1px solid #909090; background: linear-gradient(#e8e8e8, #bdbdbd); }
.scroll i { border: 3px solid transparent; border-bottom-color: #777; margin-bottom: 1px; border-top: 0; }
.plain, .marked { position: relative; }
.marked::after { content: ""; position: absolute; inset: 1px 2px 3px -2px; border: 3px solid #ee1c25; }
.item { display: flex; width: 100%; height: 22px; text-align: left; line-height: 22px; padding-left: 1px; }
.item:disabled { color: #a3a6ab; }
.gut { flex: none; width: 24px; background: #e9edf7; border-right: 1px solid #c5c9d1; display: flex; align-items: center; justify-content: center; box-sizing: border-box; }
.txt { flex: 1; padding-left: 5px; white-space: nowrap; }
.hot { background: linear-gradient(#fffdf0, #ffe9a2 45%, #ffd257 50%, #ffe48c 85%, #fff3c0); box-shadow: inset 0 1px #d8c27a, inset 0 -1px #d8c27a; }
.hot .gut { width: 20px; height: 20px; margin: 1px 3px 0 1px; border: 1px solid #f29536; border-radius: 2px; background: #ffe19a; }
</style>
